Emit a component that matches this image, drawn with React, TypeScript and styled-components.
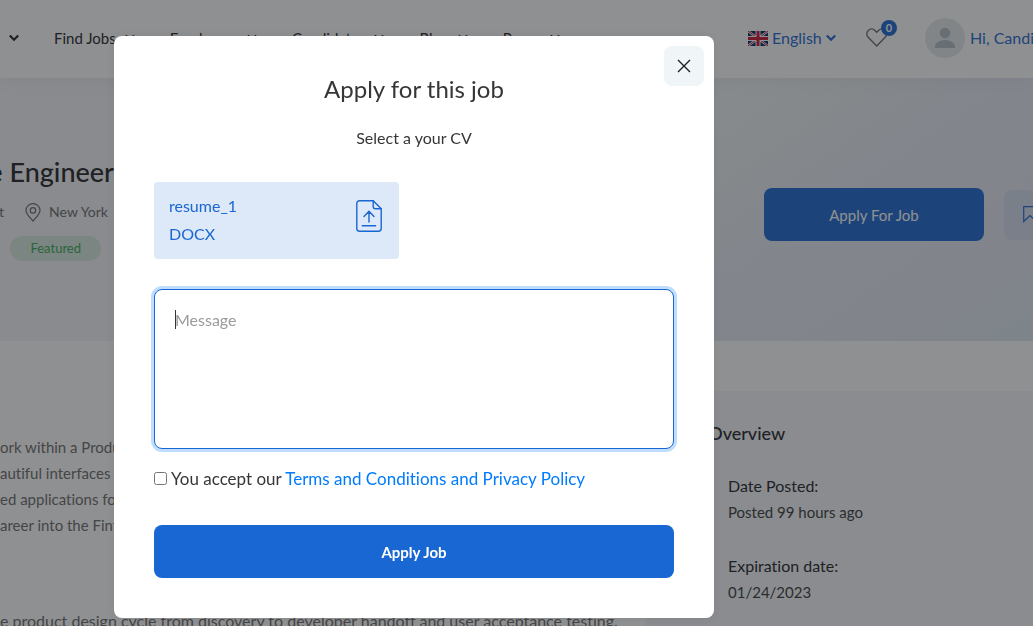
import React, { useState } from 'react';
import styled, { createGlobalStyle } from 'styled-components';

const blue = '#1967d2';
const ink = '#202124';
const body = '#696969';

const GlobalStyle = createGlobalStyle`
  *, *::before, *::after { box-sizing: border-box; }
  html, body { margin: 0; height: 100%; overflow: hidden; }
  #root { height: 100%; overflow: hidden; }
  body, button, textarea, input {
    font-family: Lato, "Liberation Sans", sans-serif;
    font-size: 16px;
    line-height: 24px;
    font-variant-ligatures: none;
  }
  body { background: #fff; color: ${ink}; }
  h1, h2, h3, p, dl, dd, ul { margin: 0; padding: 0; }
  ul { list-style: none; }
  a { text-decoration: none; }
  button { border: 0; padding: 0; cursor: pointer; }
`;

const Header = styled.header`
  display: grid;
  grid-template-columns: minmax(0, 1fr) 285px;
  align-items: center;
  height: 78px;
  padding-bottom: 2px;
  position: relative;
  background: #fff;
  box-shadow: 0 6px 15px rgba(64, 79, 104, 0.05);
`;

const Nav = styled.nav`
  display: flex;
  gap: 35px;
  padding-left: 9px;
  overflow: hidden;
`;

const NavLink = styled.a`
  display: flex;
  align-items: center;
  gap: 9px;
  color: ${ink};
  font-size: 15px;
  white-space: nowrap;
`;

const Account = styled.div`
  display: flex;
  align-items: center;
  overflow: hidden;
  height: 76px;
  white-space: nowrap;
`;

const Language = styled.button`
  flex: none;
  display: flex;
  align-items: center;
  gap: 4px;
  width: 118px;
  background: none;
  color: ${blue};
`;

const Saved = styled.a`
  flex: none;
  position: relative;
  display: block;
  width: 59px;
  height: 24px;
  color: ${body};
`;

const Badge = styled.span`
  position: absolute;
  left: 15px;
  top: -6px;
  width: 16px;
  height: 16px;
  border-radius: 50%;
  background: ${blue};
  color: #fff;
  font-size: 11px;
  font-weight: 700;
  line-height: 16px;
  text-align: center;
`;

const Profile = styled.a`
  flex: none;
  display: flex;
  align-items: center;
  gap: 5px;
  color: ${blue};
`;

const Hero = styled.section`
  display: grid;
  grid-template-columns: 114px minmax(0, 1fr) 269px;
  height: 263px;
  background: linear-gradient(
    145deg,
    #f3f4f9 0%,
    #f3f4f9 42%,
    #eef3f4 53%,
    #eaf0f3 61%,
    #e6ebf5 70%,
    #e3e7f1 88%,
    #dbe8f0 100%
  );
`;

const Summary = styled.div`
  display: flex;
  flex-direction: column;
  align-items: flex-end;
  padding-top: 78px;
  overflow: hidden;
  white-space: nowrap;
`;

const JobTitle = styled.h1`
  font-size: 27px;
  line-height: 32px;
  font-weight: 500;
`;

const Meta = styled.div`
  display: flex;
  align-items: center;
  margin: 12px 6px 12px 0;
  font-size: 14px;
  color: ${body};
  svg { margin: 0 8px 0 21px; }
`;

const Tag = styled.span`
  margin-right: 13px;
  padding: 0 20px;
  border-radius: 13px;
  background: rgba(52, 168, 83, 0.15);
  color: #34a853;
  font-size: 13px;
  line-height: 25px;
`;

const Actions = styled.div`
  grid-column: 3;
  display: flex;
  align-items: center;
  gap: 20px;
  padding-top: 10px;
  overflow: hidden;
`;

const PrimaryButton = styled.button<{ $width: string; $bold?: boolean }>`
  flex: none;
  width: ${p => p.$width};
  height: 53px;
  border-radius: 8px;
  background: ${blue};
  color: #fff;
  font-size: 15px;
  font-weight: ${p => (p.$bold ? 700 : 400)};
`;

const BookmarkButton = styled.button`
  flex: none;
  display: flex;
  align-items: center;
  width: 60px;
  height: 50px;
  padding-left: 19px;
  border-radius: 8px;
  background: rgba(25, 103, 210, 0.07);
  color: ${blue};
`;

const Details = styled.main`
  display: grid;
  grid-template-columns: minmax(0, 1fr) 387px;
  padding-top: 50px;
`;

const Description = styled.article`
  padding-top: 43px;
  color: ${body};
  line-height: 26px;
  white-space: nowrap;
`;

const Paragraph = styled.p`
  margin-bottom: 70px;
  font-size: 15px;
`;

const Sidebar = styled.aside`
  padding: 30px;
  min-height: 300px;
  background: #f5f7fc;
`;

const SidebarTitle = styled.h2`
  font-size: 18px;
  line-height: 24px;
  font-weight: 500;
`;

const Facts = styled.dl`
  display: grid;
  gap: 28px;
  padding: 28px 0 0 52px;
`;

const FactName = styled.dt`
  line-height: 26px;
`;

const FactValue = styled.dd`
  color: #363636;
  font-size: 15px;
  line-height: 26px;
`;

const Overlay = styled.div`
  position: fixed;
  inset: 0;
  padding: 36px 114px 8px;
  background: rgba(32, 33, 36, 0.5);
`;

const Dialog = styled.section`
  position: relative;
  display: flex;
  flex-direction: column;
  max-width: 600px;
  padding: 40px;
  border-radius: 8px;
  background: #fff;
  color: #363636;
  box-shadow: 0 0 10px rgba(0, 0, 0, 0.06);
`;

const Close = styled.button`
  position: absolute;
  top: 10px;
  right: 10px;
  display: grid;
  place-items: center;
  width: 40px;
  height: 40px;
  border-radius: 8px;
  background: #f0f5f7;
  color: ${ink};
`;

const DialogTitle = styled.h2`
  font-size: 24px;
  line-height: 26px;
  font-weight: 400;
  text-align: center;
`;

const Hint = styled.p`
  margin: 24px 0 32px;
  text-align: center;
`;

const Resume = styled.button`
  display: flex;
  justify-content: space-between;
  width: 245px;
  height: 77px;
  padding: 10px 17px 11px 15px;
  border-radius: 4px;
  background: #dde8f8;
  color: ${blue};
  text-align: left;
  svg { margin-top: 8px; }
`;

const ResumeText = styled.span`
  display: grid;
  line-height: 28px;
`;

const MessageField = styled.div<{ $caret: boolean }>`
  position: relative;
  margin: 30px 0 18px;
  &::before {
    content: '';
    display: ${p => (p.$caret ? 'block' : 'none')};
    position: absolute;
    left: 21px;
    top: 21px;
    width: 1px;
    height: 19px;
    background: #363636;
  }
`;

const Message = styled.textarea`
  display: block;
  width: 100%;
  height: 160px;
  padding: 18px 20px;
  border: 1px solid ${blue};
  border-radius: 8px;
  outline: 0;
  box-shadow: 0 0 0 3px rgba(0, 123, 255, 0.25);
  color: ${body};
  resize: none;
  &:placeholder-shown { caret-color: transparent; }
  &::placeholder { color: #9b9b9b; }
`;

const Consent = styled.label`
  display: flex;
  align-items: center;
  gap: 4px;
  margin-bottom: 34px;
  font-size: 17px;
  input { width: 13px; height: 13px; margin: 0 0 2px; }
  a { color: #007bff; }
`;

const Chevron = () => (
  <svg width="10" height="8" viewBox="0 0 10 8" fill="none" stroke="currentColor" strokeWidth="2.200">
    <path d="M.8 1.500 5 5.700 9.200 1.500" />
  </svg>
);

const Flag = () => (
  <svg width="20" height="15" viewBox="0 0 20 15">
    <path fill="#012169" d="M0 0h20v15H0z" />
    <path stroke="#fff" strokeWidth="2.200" d="m0 0 20 15M20 0 0 15" />
    <path stroke="#c8102e" strokeWidth="1" d="m0 0 20 15M20 0 0 15" />
    <path stroke="#fff" strokeWidth="5" d="M10 0v15M0 7.500h20" />
    <path stroke="#c8102e" strokeWidth="3" d="M10 0v15M0 7.500h20" />
  </svg>
);

const Heart = () => (
  <svg width="22" height="24" viewBox="0 0 22 24" fill="none" stroke="currentColor" strokeWidth="1.400" strokeLinejoin="miter">
    <path d="M10.700 20 2.200 11.300C.3 9.300.4 6.200 2.300 4.400c1.900-1.900 4.700-1.800 6.600 0l1.800 1.800 1.800-1.800c1.900-1.800 4.700-1.900 6.600 0 1.900 1.800 2 4.900.1 6.900Z" />
  </svg>
);

const Avatar = () => (
  <svg width="40" height="40" viewBox="0 0 40 40">
    <circle cx="20" cy="20" r="20" fill="#e4e9eb" />
    <circle cx="20" cy="15" r="5.200" fill="#aebdc4" />
    <path fill="#aebdc4" d="M10 30v-1.500C10 25 14.500 22 20 22s10 3 10 6.500V30Z" />
  </svg>
);

const Pin = () => (
  <svg width="16" height="19" viewBox="0 0 16 19" fill="none" stroke="currentColor" strokeWidth="1.200">
    <path d="M8 18C5 14.500 1 11 1 7.400a7 6.800 0 0 1 14 0C15 11 11 14.500 8 18Z" />
    <circle cx="8" cy="7.400" r="2.700" />
  </svg>
);

const Bookmark = () => (
  <svg width="14" height="17" viewBox="0 0 14 17" fill="none" stroke="currentColor" strokeWidth="1.200">
    <path d="M.7.700h12.600v14.800L7 9.500.700 15.500Z" />
  </svg>
);

const FileUpload = () => (
  <svg width="26" height="32" viewBox="0 0 26 32" fill="none" stroke="currentColor" strokeWidth="1.400" strokeLinecap="round" strokeLinejoin="round">
    <path d="M17.200.800H3.500A2.700 2.700 0 0 0 .8 3.500v25a2.700 2.700 0 0 0 2.700 2.700h19a2.700 2.700 0 0 0 2.700-2.700V8.800Z" />
    <path d="M17.200.800v5.700a2.300 2.300 0 0 0 2.300 2.300h5.700" />
    <path d="M13 22V11.300M8 16.400l5-5.100 5 5.100M6.300 25.700h13.400" />
  </svg>
);

const Cross = () => (
  <svg width="14" height="14" viewBox="0 0 14 14" stroke="currentColor" strokeWidth="1.400">
    <path d="m1 1 12 12M13 1 1 13" />
  </svg>
);

const menu = ['', 'Find Jobs', 'Employers', 'Candidates', 'Blog', 'Pages'];

const facts = [
  { name: 'Date Posted:', value: 'Posted 99 hours ago' },
  { name: 'Expiration date:', value: '01/24/2023' },
];

export default function App() {
  const [message, setMessage] = useState('');
  const [focused, setFocused] = useState(true);

  return (
    <>
      <GlobalStyle />
      <Header>
        <Nav>
          {menu.map(item => (
            <NavLink href="#" key={item} aria-label={item || 'Home'}>
              {item}
              <Chevron />
            </NavLink>
          ))}
        </Nav>
        <Account>
          <Language>
            <Flag />
            English
            <Chevron />
          </Language>
          <Saved href="#" aria-label="Saved jobs">
            <Heart />
            <Badge>0</Badge>
          </Saved>
          <Profile href="#">
            <Avatar />
            Hi, Candidate
          </Profile>
        </Account>
      </Header>
      <Hero>
        <Summary>
          <JobTitle>Software Engineer</JobTitle>
          <Meta>
            Development
            <Pin />
            New York
          </Meta>
          <Tag>Featured</Tag>
        </Summary>
        <Actions>
          <PrimaryButton $width="220px">Apply For Job</PrimaryButton>
          <BookmarkButton aria-label="Bookmark">
            <Bookmark />
          </BookmarkButton>
        </Actions>
      </Hero>
      <Details>
        <Description>
          <Paragraph>
            ork within a Product
            <br />
            autiful interfaces
            <br />
            ed applications for
            <br />
            areer into the Fintech
          </Paragraph>
          <ul>
            <li>e product design cycle from discovery to developer handoff and user acceptance testing.</li>
          </ul>
        </Description>
        <Sidebar>
          <SidebarTitle>Job Overview</SidebarTitle>
          <Facts>
            {facts.map(fact => (
              <div key={fact.name}>
                <FactName>{fact.name}</FactName>
                <FactValue>{fact.value}</FactValue>
              </div>
            ))}
          </Facts>
        </Sidebar>
      </Details>
      <Overlay>
        <Dialog role="dialog" aria-modal="true" aria-labelledby="apply-title">
          <Close aria-label="Close">
            <Cross />
          </Close>
          <DialogTitle id="apply-title">Apply for this job</DialogTitle>
          <Hint>Select a your CV</Hint>
          <Resume>
            <ResumeText>
              <span>resume_1</span>
              <span>DOCX</span>
            </ResumeText>
            <FileUpload />
          </Resume>
          <MessageField $caret={focused && !message}>
            <Message
              placeholder="Message"
              aria-label="Message"
              autoFocus
              value={message}
              onChange={e => setMessage(e.target.value)}
              onFocus={() => setFocused(true)}
              onBlur={() => setFocused(false)}
            />
          </MessageField>
          <Consent>
            <input type="checkbox" />
            <span>
              You accept our <a href="#">Terms and Conditions and Privacy Policy</a>
            </span>
          </Consent>
          <PrimaryButton $width="100%" $bold>
            Apply Job
          </PrimaryButton>
        </Dialog>
      </Overlay>
    </>
  );
}
